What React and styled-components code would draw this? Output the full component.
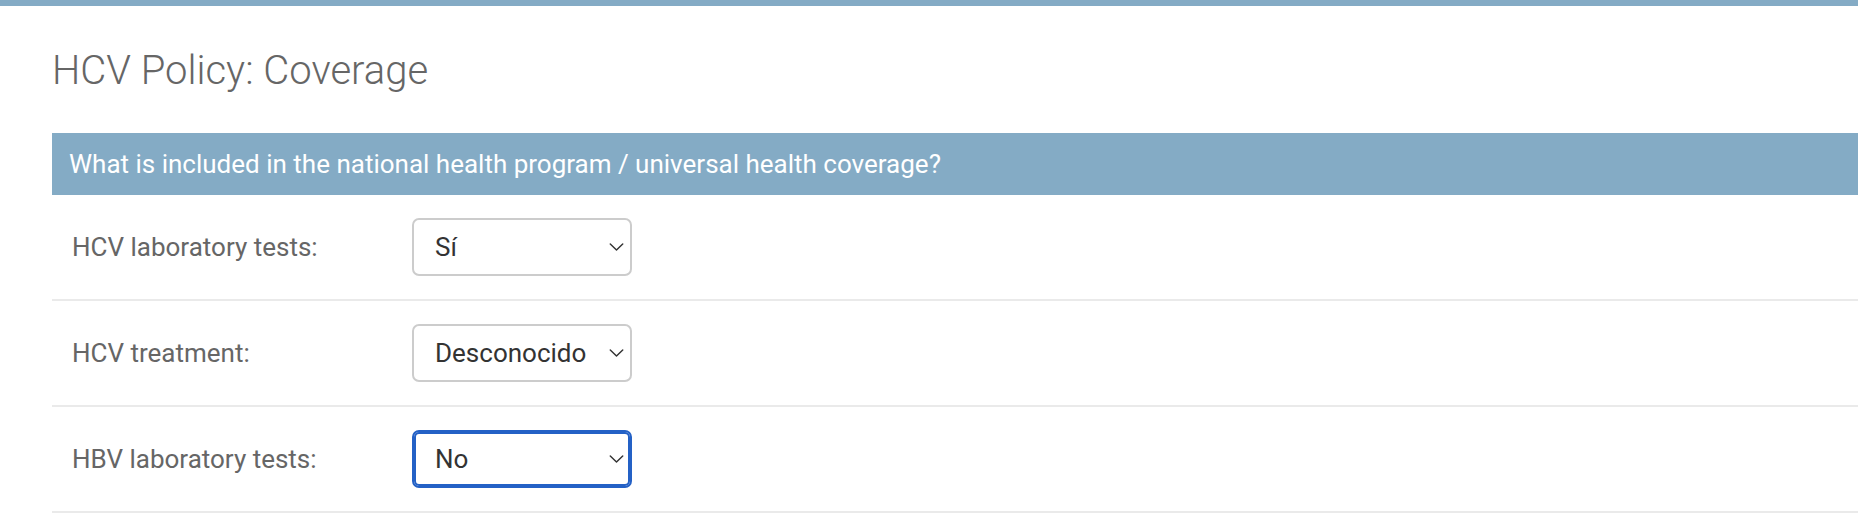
import React from "react";
import styled, { createGlobalStyle } from "styled-components";

const GlobalStyle = createGlobalStyle`
  html, body {
    margin: 0;
    padding: 0;
    background: #fff;
    font-family: Roboto, "Liberation Sans", Arial, sans-serif;
  }
`;

const options = ["---------", "Sí", "No", "Desconocido"];

const fields = [
  { key: "hcv_lab", label: "HCV laboratory tests:", value: "Sí" },
  { key: "hcv_treat", label: "HCV treatment:", value: "Desconocido" },
  { key: "hbv_lab", label: "HBV laboratory tests:", value: "No", focused: true },
];

const App = () => {
  return (
    <Page>
      <GlobalStyle />
      <TopBar />
      <Content>
        <Title>HCV Policy: Coverage</Title>
        <Fieldset>
          <Legend>
            What is included in the national health program / universal health
            coverage?
          </Legend>
          {fields.map((f) => (
            <FormRow key={f.key}>
              <Label htmlFor={f.key}>{f.label}</Label>
              <SelectWrap>
                <Select id={f.key} defaultValue={f.value} focused={f.focused}>
                  {options.map((o) => (
                    <option key={o} value={o}>
                      {o}
                    </option>
                  ))}
                </Select>
                <Chevron viewBox="0 0 16 9" aria-hidden="true">
                  <path d="M1 1 L8 8 L15 1" />
                </Chevron>
              </SelectWrap>
            </FormRow>
          ))}
        </Fieldset>
      </Content>
    </Page>
  );
};

export default App;

const Page = styled.div`
  width: 100%;
  min-height: 516px;
  background: #fff;
`;

const TopBar = styled.div`
  height: 6px;
  background: #84abc5;
`;

const Content = styled.div`
  padding: 41px 0 0 52px;
`;

const Title = styled.h1`
  margin: 0 0 39px;
  font-size: 40px;
  font-weight: 300;
  line-height: normal;
  color: #666;
`;

const Fieldset = styled.fieldset`
  margin: 0;
  padding: 0;
  border: none;
  min-width: 0;
`;

const Legend = styled.h2`
  margin: 0;
  padding: 16px 17px;
  background: #84abc5;
  color: #fff;
  font-size: 26px;
  font-weight: 400;
  line-height: normal;
`;

const FormRow = styled.div`
  display: flex;
  align-items: center;
  padding: 23px 20px;
  border-bottom: 2px solid #eaeaea;
`;

const Label = styled.label`
  width: 340px;
  flex-shrink: 0;
  font-size: 26px;
  color: #666;
`;

const SelectWrap = styled.div`
  position: relative;
  width: 220px;
`;

const Select = styled.select.withConfig({
  shouldForwardProp: (p) => p !== "focused",
})`
  appearance: none;
  -webkit-appearance: none;
  display: block;
  width: 100%;
  height: 58px;
  box-sizing: border-box;
  padding: 0 40px 0 21px;
  font-family: Roboto, "Liberation Sans", Arial, sans-serif;
  font-size: 26px;
  color: #333;
  background: #fff;
  border: 2px solid ${({ focused }) => (focused ? "#2461c6" : "#cccccc")};
  border-radius: 7px;
  box-shadow: ${({ focused }) =>
    focused ? "inset 0 0 0 2px #2461c6" : "none"};
  outline: none;
`;

const Chevron = styled.svg`
  position: absolute;
  right: 8px;
  top: 50%;
  width: 15px;
  height: 8px;
  margin-top: -4px;
  fill: none;
  stroke: #333;
  stroke-width: 1.6;
  stroke-linecap: round;
  stroke-linejoin: round;
  pointer-events: none;
`;
